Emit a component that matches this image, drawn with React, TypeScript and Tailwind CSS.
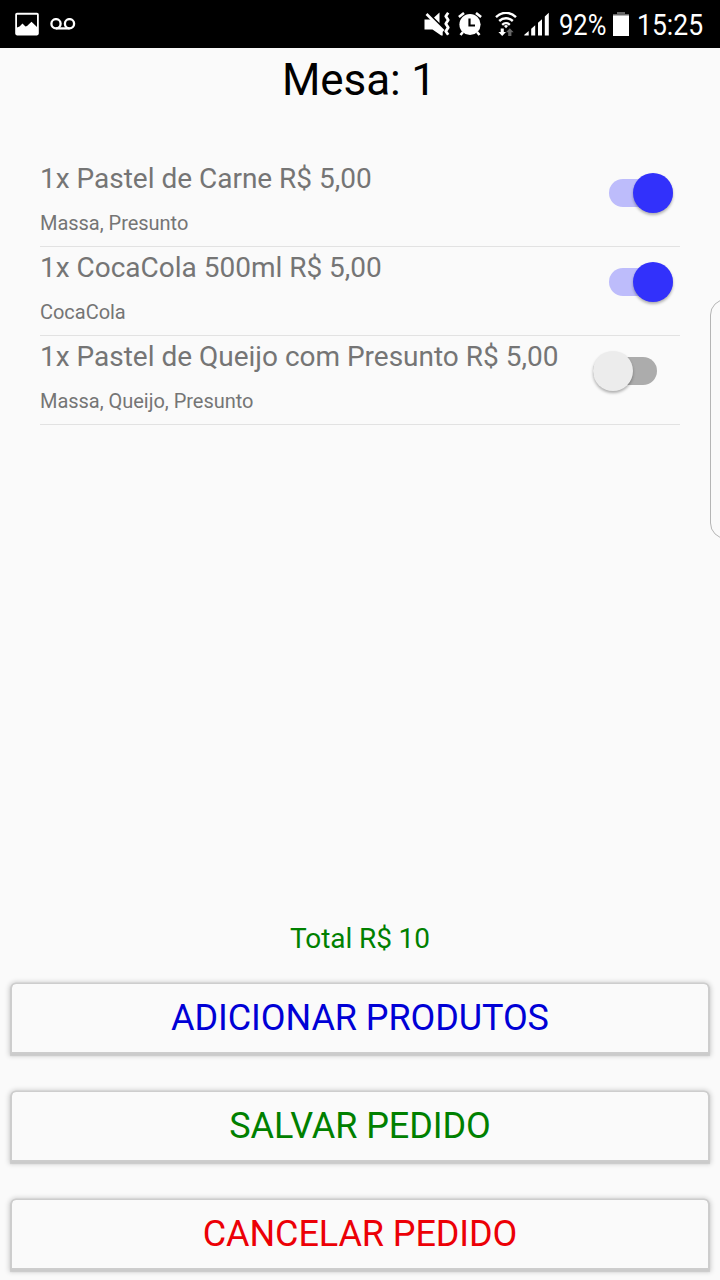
import clsx from "clsx";

type OrderItem = {
  id: number;
  label: string;
  ingredients: string;
  active: boolean;
};

const items: OrderItem[] = [
  { id: 1, label: "1x Pastel de Carne R$ 5,00", ingredients: "Massa, Presunto", active: true },
  { id: 2, label: "1x CocaCola 500ml R$ 5,00", ingredients: "CocaCola", active: true },
  {
    id: 3,
    label: "1x Pastel de Queijo com Presunto R$ 5,00",
    ingredients: "Massa, Queijo, Presunto",
    active: false,
  },
];

function PictureIcon() {
  return (
    <svg className="h-6 w-6" viewBox="0 0 24 24">
      <path
        fill="#fff"
        fillRule="evenodd"
        d="M2 .8h20A1.8 1.8 0 0 1 23.8 2.6v19A1.8 1.8 0 0 1 22 23.4H2A1.8 1.8 0 0 1 .2 21.6v-19A1.8 1.8 0 0 1 2 .8ZM2 2.8v12.7l2.5-1 3-3 3 3 1.5-.5 4.5-4.2 5.5 5.2V2.8Z"
      />
    </svg>
  );
}

function VoicemailIcon() {
  return (
    <svg className="h-3 w-[26px]" viewBox="0 0 26 12" fill="none" stroke="#fff" strokeWidth="2.3">
      <circle cx="6" cy="5.7" r="4.6" />
      <circle cx="19.5" cy="5.7" r="4.6" />
      <path d="M6 10.4h13.5" />
    </svg>
  );
}

function MuteVibrateIcon() {
  return (
    <svg className="h-6 w-[26px]" viewBox="0 0 26 24">
      <path fill="#fff" d="M.5 7.5h6.7L18.7 19v4.5h-1.5L8.5 17.5h-8ZM10 5.5 15.5.5v10.5Z" />
      <path stroke="#fff" strokeWidth="2.6" d="m2.5 2 17 17" />
      <path
        fill="none"
        stroke="#fff"
        strokeWidth="2.8"
        strokeLinejoin="round"
        d="m24.2 .8-2.4 3.4L24.2 8l-2.4 3.8 2.4 3.7-2.4 3.8 2.4 3.4"
      />
    </svg>
  );
}

function AlarmIcon() {
  return (
    <svg className="h-6 w-6" viewBox="0 0 24 24" fill="none">
      <circle cx="12" cy="12.5" r="10.6" fill="#fff" />
      <path stroke="#fff" strokeWidth="2.6" d="M.9 5 6 1M18 1l5.1 4M5 20l-2.5 3M19 20l2.5 3" />
      <path stroke="#000" strokeWidth="2.2" d="M11.5 6.5v7H17" />
    </svg>
  );
}

function WifiIcon() {
  return (
    <svg className="h-6 w-[22px]" viewBox="0 0 22 24" fill="none">
      <path
        stroke="#fff"
        strokeWidth="2.4"
        d="M1 5.2C7-.6 15-.6 21 5.2M4.2 9c4-3.7 9.6-3.7 13.6 0M7.2 12.8c2.2-2 5.4-2 7.6 0"
      />
      <path fill="#fff" d="m11 16.3 2-2.3a3 3 0 0 0-4 0Z" />
      <path fill="#fff" d="M5.7 16.5h3.1v3.5h2.2l-3.8 4-3.8-4h2.3Z" />
      <path fill="#666" d="m14.8 16.3 3.8 4h-2.2V24h-3.2v-3.7H11Z" />
    </svg>
  );
}

function SignalIcon() {
  return (
    <svg className="h-6 w-[26px]" viewBox="0 0 26 24" fill="#fff">
      <path d="M.3 23.5V22.8l4.4-3.8v4.5ZM7.2 23.5v-6.7l4-3.5v10.2ZM14 23.5V10.8l4-3.5v16.2ZM20.8 23.5V4.6l4-3.8v22.7Z" />
    </svg>
  );
}

function BatteryIcon() {
  return (
    <svg className="h-6 w-4" viewBox="0 0 16 24">
      <path fill="#666" d="M4 0h8v2h4v3H0V2h4Z" />
      <path fill="#fff" d="M0 3.5h16V24H0Z" />
    </svg>
  );
}

function StatusBar() {
  return (
    <header className="flex h-12 items-center bg-black pl-[14.5px] text-[30px] leading-none text-white">
      <PictureIcon />
      <div className="ml-[11px]">
        <VoicemailIcon />
      </div>
      <div className="ml-[348.5px] flex items-center">
        <MuteVibrateIcon />
        <div className="ml-2">
          <AlarmIcon />
        </div>
        <div className="ml-[12.5px]">
          <WifiIcon />
        </div>
        <div className="ml-[7.5px]">
          <SignalIcon />
        </div>
      </div>
      <span className="ml-[9px] mt-0.5 w-[53.5px] origin-left scale-x-[0.85]">92%</span>
      <BatteryIcon />
      <span className="ml-2 mt-0.5 origin-left scale-x-[0.885]">15:25</span>
    </header>
  );
}

function Toggle({ active }: { active: boolean }) {
  return (
    <button
      type="button"
      role="switch"
      aria-checked={active}
      className={clsx("flex h-10 w-16 items-center", active ? "mr-[7px] justify-end" : "mr-[23px]")}
    >
      <span
        className={clsx(
          "flex h-7 w-16 items-center rounded-full",
          active ? "justify-end bg-[#bdbcfb]" : "bg-[#acacac]",
        )}
      >
        <span
          className={clsx(
            "size-10 shrink-0 rounded-full shadow-[0_2px_3px_rgba(0,0,0,0.3)]",
            active ? "bg-[#3231fb]" : "bg-[#ececec]",
          )}
        />
      </span>
    </button>
  );
}

function OrderRow({ item }: { item: OrderItem }) {
  return (
    <li className="flex h-[88.8px] justify-between border-b border-[#e2e2e2] pt-[3px] text-[#757575]">
      <div>
        <p className="pt-[0.2px] text-[28px] leading-9 tracking-[-0.01px]">{item.label}</p>
        <p className="mt-[11.5px] text-[20px] leading-7 tracking-[-0.03px]">{item.ingredients}</p>
      </div>
      <div className="mt-3">
        <Toggle active={item.active} />
      </div>
    </li>
  );
}

function ActionButton({ label, color }: { label: string; color: string }) {
  return (
    <button
      type="button"
      className={clsx(
        "h-[68px] rounded-t-[4px] text-center text-[36px] leading-[68px] tracking-[-0.08px] shadow-[0_0_0_1.5px_#cdcdcd,0_2px_1px_1.5px_#cbcbcb,0_1px_5px_3px_rgba(0,0,0,0.18)]",
        color,
      )}
    >
      {label}
    </button>
  );
}

export default function App() {
  return (
    <div className="relative flex h-[1280px] w-[720px] flex-col overflow-hidden bg-[#fafafa] font-['Roboto',sans-serif]">
      <StatusBar />
      <h1 className="h-[110.3px] pr-0.5 pt-1 text-center text-[44px] leading-[56px] tracking-[-0.1px] text-black">
        Mesa: 1
      </h1>
      <ul className="mx-10 flex-1">
        {items.map((item) => (
          <OrderRow key={item.id} item={item} />
        ))}
      </ul>
      <p className="mb-[25px] text-center text-[28px] leading-10 tracking-[-0.1px] text-[#008000]">
        Total R$ 10
      </p>
      <div className="mx-3 mb-3 flex flex-col gap-10">
        <ActionButton label="ADICIONAR PRODUTOS" color="text-[#0000d6]" />
        <ActionButton label="SALVAR PEDIDO" color="text-[#008000]" />
        <ActionButton label="CANCELAR PEDIDO" color="text-[#ec0006]" />
      </div>
      {/* Edge panel handle, clipped by the right side of the screen */}
      <div className="absolute left-[710px] top-[299px] h-[240px] w-8 rounded-[16px] border border-[#b5b5b5]" />
    </div>
  );
}
